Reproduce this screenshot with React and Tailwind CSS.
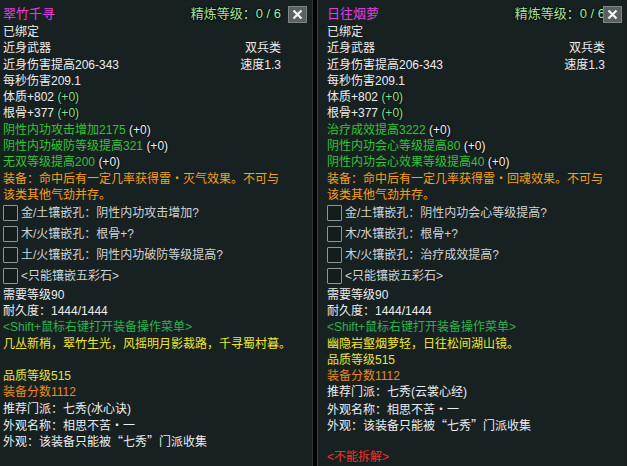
import React from "react";

const CJK = "font-['Noto_Sans_CJK_SC',sans-serif]";

const LEFT = {
  title: "翠竹千寻",
  stats: [
    "阴性内功攻击增加2175",
    "阴性内功破防等级提高321",
    "无双等级提高200",
  ],
  effect: ["装备：命中后有一定几率获得雷", "灭气效果。不可与"],
  sockets: [
    "金/土镶嵌孔：阴性内功攻击增加?",
    "木/火镶嵌孔：根骨+?",
    "土/火镶嵌孔：阴性内功破防等级提高?",
    "<只能镶嵌五彩石>",
  ],
  poem: "几丛新梢，翠竹生光，风摇明月影裁路，千寻蜀村暮。",
  gapAfterPoem: true,
  school: "推荐门派：七秀(冰心诀)",
};

const RIGHT = {
  title: "日往烟萝",
  stats: [
    "治疗成效提高3222",
    "阴性内功会心等级提高80",
    "阴性内功会心效果等级提高40",
  ],
  effect: ["装备：命中后有一定几率获得雷", "回魂效果。不可与"],
  sockets: [
    "金/土镶嵌孔：阴性内功会心等级提高?",
    "木/水镶嵌孔：根骨+?",
    "木/火镶嵌孔：治疗成效提高?",
    "<只能镶嵌五彩石>",
  ],
  poem: "幽隐岩壑烟萝轻，日往松间湖山镜。",
  gapAfterPoem: false,
  school: "推荐门派：七秀(云裳心经)",
};

const Dot = () => <span className={CJK}>・</span>;

const Plus = ({ green }) => (
  <span
    className={`${green ? "text-[#8ee08e]" : "text-[#f2f2f2]"} [text-shadow:0_0_2px_#000,0_0_1px_#000]`}
  >
    {" "}(+0)
  </span>
);

const Line = ({ className = "text-[#ececec]", children }) => (
  <div className={`h-[16.25px] whitespace-nowrap ${className}`}>{children}</div>
);

const CloseBtn = () => (
  <div className="absolute top-[6px] right-[5px] flex h-[17px] w-[19px] items-center justify-center border border-[#7d8686] bg-[#596161]">
    <svg width="11" height="11" viewBox="0 0 11 11">
      <path d="M1.5 1.5 L9.5 9.5 M9.5 1.5 L1.5 9.5" stroke="#f4f4f4" strokeWidth="2.2" />
    </svg>
  </div>
);

const Socket = ({ text }) => (
  <div className="flex h-[21px] items-center">
    <div className="mr-[3px] h-[16px] w-[15px] rounded-[1px] border border-[#8c9696] bg-[#141c1c]" />
    <span className="whitespace-nowrap text-[#cfd2d2]">{text}</span>
  </div>
);

const Panel = ({ data, className }) => (
  <div className={`relative shrink-0 overflow-hidden bg-[#172121] pt-[4px] ${className}`}>
    <CloseBtn />
    <div className="w-[278px]">
      <div className="flex h-[20px] items-center justify-between">
        <span className="text-[13px] text-[#e23fe2]">{data.title}</span>
        <span className="text-[13px] text-[#a6e29e] [text-shadow:0_0_2px_#000,0_0_2px_#000]">
          精炼等级：<span className="text-[#9cf09c]">0 / 6</span>
        </span>
      </div>
      <Line>已绑定</Line>
      <Line className="flex justify-between text-[#ececec]">
        <span>近身武器</span>
        <span>双兵类</span>
      </Line>
      <Line className="flex justify-between text-[#ececec]">
        <span>近身伤害提高206-343</span>
        <span>速度1.3</span>
      </Line>
      <Line>每秒伤害209.1</Line>
      <Line>
        体质+802
        <Plus green />
      </Line>
      <Line>
        根骨+377
        <Plus green />
      </Line>
      {data.stats.map((s) => (
        <Line key={s} className="text-[#36c236]">
          {s}
          <Plus />
        </Line>
      ))}
      <Line className="text-[#f5a01e]">
        {data.effect[0]}
        <Dot />
        {data.effect[1]}
      </Line>
      <Line className="text-[#f5a01e]">该类其他气劲并存。</Line>
      {data.sockets.map((s) => (
        <Socket key={s} text={s} />
      ))}
      <Line>需要等级90</Line>
      <Line>耐久度：1444/1444</Line>
      <Line className="text-[#2eb24e]">&lt;Shift+鼠标右键打开装备操作菜单&gt;</Line>
      <Line className="text-[#f0e62c]">{data.poem}</Line>
      {data.gapAfterPoem && <Line />}
      <Line className="text-[#e6e23e]">品质等级515</Line>
      <Line className="text-[#e8891e]">装备分数1112</Line>
      <Line>{data.school}</Line>
      <Line>
        外观名称：相思不苦
        <Dot />一
      </Line>
      <Line>
        外观：该装备只能被<span className={CJK}>“</span>七秀<span className={CJK}>”</span>门派收集
      </Line>
      <Line />
      <Line className="text-[#ff2b2b]">&lt;不能拆解&gt;</Line>
    </div>
  </div>
);

export default function App() {
  return (
    <div className="flex h-[466px] w-[628px] overflow-hidden bg-white font-['Liberation_Sans','Noto_Sans_CJK_SC',sans-serif] text-[12px] leading-[16.25px]">
      <Panel data={LEFT} className="w-[313px] border-r border-[#2a3434] pl-[3px]" />
      <div className="w-[4px] shrink-0 bg-black" />
      <Panel data={RIGHT} className="w-[310px] border-l border-[#3a4444] pl-[9px]" />
    </div>
  );
}
